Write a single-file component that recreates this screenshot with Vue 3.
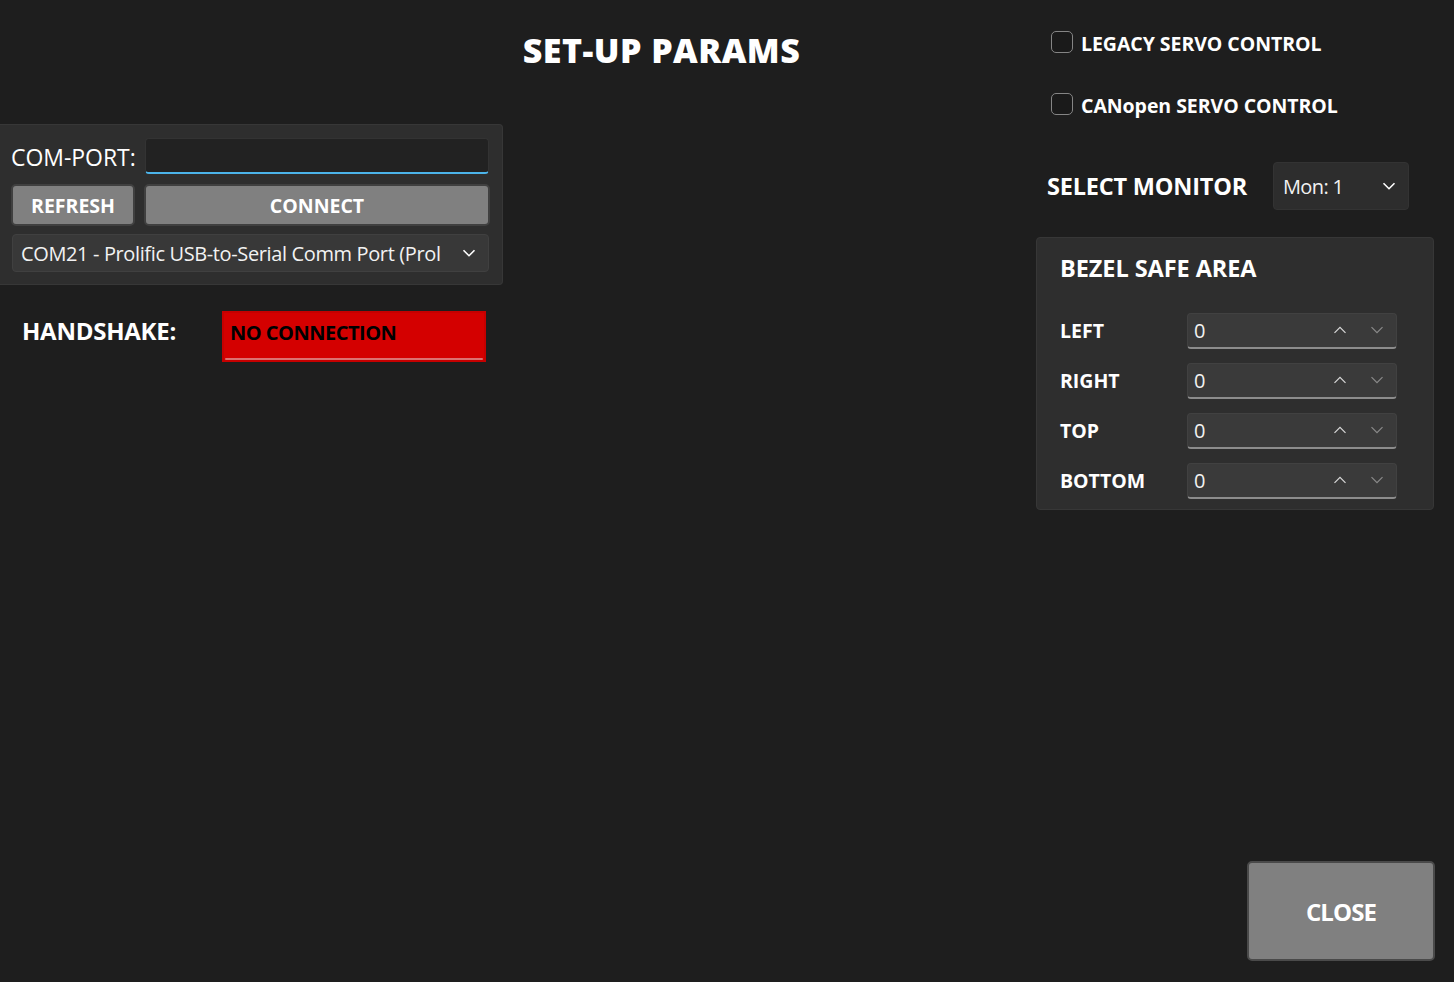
<template>
  <div class="page">
    <section class="left">
      <div class="panel">
        <div class="port-row">
          <label class="port-label" for="port">COM-PORT:</label>
          <input id="port" class="port-input" type="text" />
        </div>
        <div class="btn-row">
          <button class="btn refresh">REFRESH</button>
          <button class="btn connect">CONNECT</button>
        </div>
        <div class="select port-select">
          <span class="select-text">COM21 - Prolific USB-to-Serial Comm Port (Prol</span>
          <svg class="chev" width="14" height="8" viewBox="0 0 14 8"><path d="M1.5 1.2 7 6.7l5.5-5.5" /></svg>
        </div>
      </div>
      <div class="handshake">
        <span class="hs-label">HANDSHAKE:</span>
        <div class="hs-status"><span>NO CONNECTION</span></div>
      </div>
    </section>

    <section class="center">
      <h1 class="title">SET-UP PARAMS</h1>
    </section>

    <section class="right">
      <label class="check"><span class="box"></span><span>LEGACY SERVO CONTROL</span></label>
      <label class="check second"><span class="box"></span><span>CANopen SERVO CONTROL</span></label>
      <div class="monitor">
        <span class="mon-label">SELECT MONITOR</span>
        <div class="select mon-select">
          <span class="select-text mon-text">Mon: 1</span>
          <svg class="chev" width="14" height="8" viewBox="0 0 14 8"><path d="M1.5 1.2 7 6.7l5.5-5.5" /></svg>
        </div>
      </div>
      <div class="bezel">
        <h2 class="bezel-title">BEZEL SAFE AREA</h2>
        <div class="bezel-rows">
          <div v-for="side in sides" :key="side" class="bezel-row">
            <span class="side">{{ side }}</span>
            <div class="num">
              <span class="num-value">0</span>
              <svg class="spin up" width="14" height="8" viewBox="0 0 14 8"><path d="M1.5 6.8 7 1.3l5.5 5.5" /></svg>
              <svg class="spin down" width="14" height="8" viewBox="0 0 14 8"><path d="M1.5 1.2 7 6.7l5.5-5.5" /></svg>
            </div>
          </div>
        </div>
      </div>
      <button class="btn close">CLOSE</button>
    </section>
  </div>
</template>

<script setup>
const sides = ['LEFT', 'RIGHT', 'TOP', 'BOTTOM']
</script>

<style>
html, body { margin: 0; background: #1e1e1e; }
</style>

<style scoped>
.page {
  display: flex;
  width: 1454px;
  height: 982px;
  overflow: hidden;
  background: #1e1e1e;
  color: #fff;
  font-family: "Open Sans", "Noto Sans", sans-serif;
  box-sizing: border-box;
}
.left { width: 503px; flex: none; padding-top: 124px; box-sizing: border-box; }
.panel {
  height: 161px;
  box-sizing: border-box;
  background: #2e2e2e;
  border: 1px solid #373737;
  border-left: 0;
  border-radius: 0 4px 4px 0;
  padding: 13px 13px 0 12px;
}
.port-row { display: flex; align-items: center; gap: 9px; height: 36px; }
.port-label { font-size: 23px; letter-spacing: -0.05px; margin-left: -1px; padding-top: 2px; width: 125px; white-space: nowrap; color: #fff; }
.port-input {
  flex: 1;
  height: 36px;
  min-width: 0;
  box-sizing: border-box;
  background: #222;
  border: 1px solid #333;
  border-bottom: 2px solid #4cb4ea;
  border-radius: 4px;
  outline: none;
}
.btn-row { display: flex; gap: 9px; margin-top: 10px; margin-left: -1px; margin-right: -1px; }
.btn {
  box-sizing: border-box;
  background: #808080;
  border: 2px solid #404040;
  border-radius: 5px;
  color: #fff;
  font-family: inherit;
  font-weight: 700;
  padding: 0;
}
.refresh { width: 124px; height: 42px; font-size: 19.5px; padding-top: 1px; }
.connect { flex: 1; height: 42px; font-size: 19.5px; padding-top: 1px; }
.select {
  display: flex;
  align-items: center;
  justify-content: space-between;
  box-sizing: border-box;
  background: #383838;
  border: 1px solid #404040;
  border-radius: 4px;
}
.port-select { height: 38px; margin-top: 8px; padding: 0 12px 0 8px; }
.select-text { font-size: 20px; letter-spacing: -0.37px; white-space: nowrap; color: #f2f2f2; }
.mon-text { letter-spacing: -0.63px; }
.chev { fill: none; stroke: #fff; stroke-width: 1.6; flex: none; }
.handshake { display: flex; margin-top: 26px; }
.hs-label { font-weight: 700; font-size: 24px; letter-spacing: -0.25px; margin-left: 22px; width: 200px; line-height: 40px; }
.hs-status {
  position: relative;
  width: 264px;
  height: 51px;
  box-sizing: border-box;
  background: #d40000;
  border: 2px solid #c60000;
  padding-left: 6px;
  color: #000;
  font-weight: 700;
  font-size: 20px;
  letter-spacing: -0.5px;
  line-height: 39px;
}
.hs-status::after {
  content: "";
  position: absolute;
  left: 1px;
  right: 1px;
  bottom: 0;
  height: 2px;
  border-radius: 1px;
  background: #dc7070;
}

.center { flex: 1; min-width: 0; display: flex; flex-direction: column; }
.title {
  margin: 27px 0 0;
  width: 317px;
  text-align: center;
  font-size: 34px;
  font-weight: 800;
  letter-spacing: 0.45px;
  line-height: 46px;
  white-space: nowrap;
}

.right {
  width: 418px;
  flex: none;
  padding: 0 20px 21px 0;
  display: flex;
  flex-direction: column;
  box-sizing: border-box;
}
.check {
  display: flex;
  align-items: center;
  gap: 8px;
  margin-left: 15px;
  margin-top: 31px;
  height: 24px;
  font-size: 19.5px;
  font-weight: 700;
  letter-spacing: -0.05px;
  white-space: nowrap;
}
.check.second { margin-top: 38px; }
.box {
  width: 22px;
  height: 22px;
  box-sizing: border-box;
  border: 1.5px solid #858585;
  border-radius: 5px;
  background: #1a1a1a;
  flex: none;
  position: relative;
  top: -1px;
}
.monitor { display: flex; align-items: center; margin-top: 45px; margin-left: 11px; }
.mon-label { font-size: 23.5px; font-weight: 700; letter-spacing: -0.2px; width: 226px; white-space: nowrap; }
.mon-select { width: 136px; height: 48px; background: #2d2d2d; border-color: #333; padding: 0 12px 0 9px; margin-top: 0; }
.bezel {
  margin-top: 27px;
  height: 273px;
  box-sizing: border-box;
  background: #2e2e2e;
  border: 1px solid #373737;
  border-radius: 4px;
  padding: 0 36px 0 23px;
}
.bezel-title { margin: 14px 0 0; font-size: 23.5px; font-weight: 700; letter-spacing: -0.07px; line-height: 32px; white-space: nowrap; }
.bezel-rows { display: flex; flex-direction: column; gap: 14px; margin-top: 29px; }
.bezel-row { display: flex; align-items: center; height: 36px; }
.side { width: 127px; padding-bottom: 2px; font-size: 19.5px; font-weight: 700; letter-spacing: 0; }
.num {
  flex: 1;
  height: 36px;
  box-sizing: border-box;
  display: flex;
  align-items: center;
  background: #3a3a3a;
  border: 1px solid #414141;
  border-bottom: 2px solid #8c8c8c;
  border-radius: 4px;
  padding: 0 12px 1px 6px;
}
.num-value { flex: 1; font-size: 20px; color: #f2f2f2; }
.spin { fill: none; stroke-width: 1.2; }
.up { stroke: #d8d8d8; margin-right: 23px; }
.down { stroke: #8a8a8a; }
.close {
  margin-top: auto;
  align-self: flex-end;
  width: 188px;
  height: 100px;
  margin-right: -1px;
  font-size: 24px;
  letter-spacing: -0.9px;
  border-width: 2px;
  border-color: #4a4a4a;
}
</style>
